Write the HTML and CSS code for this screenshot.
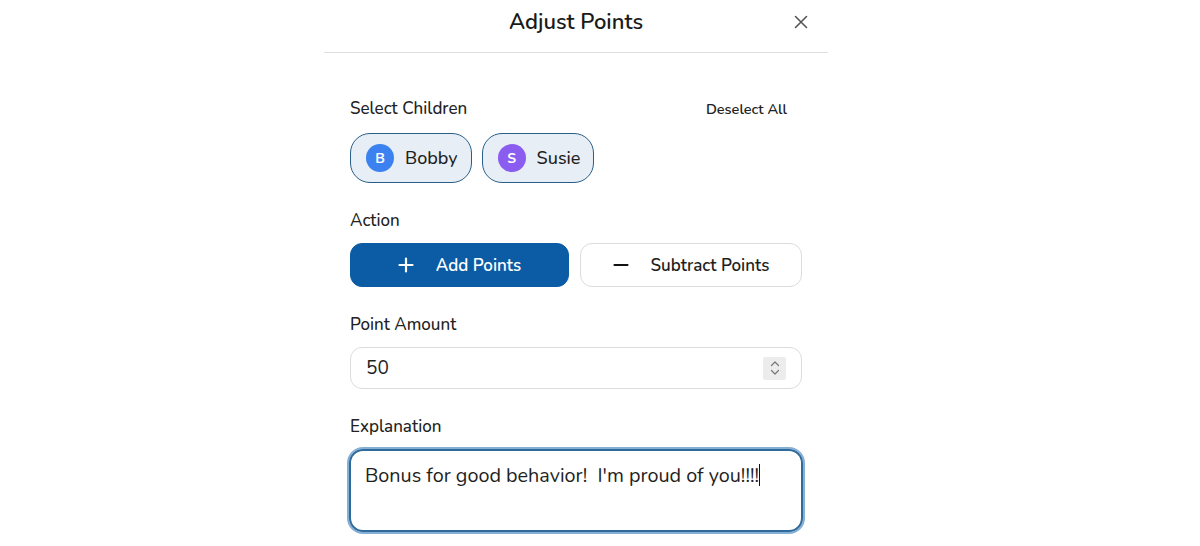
FILE: index.html
```html
<!DOCTYPE html>
<html lang="en">
<head>
<meta charset="utf-8">
<title>Adjust Points</title>
<link rel="stylesheet" href="styles.css">
</head>
<body>
<div class="page">
  <div class="modal">
    <header class="modal-header">
      <span class="spacer"></span>
      <h1 class="modal-title">Adjust Points</h1>
      <button class="close-btn" aria-label="Close">
        <svg width="14" height="14" viewBox="0 0 14 14"><path d="M1.5 1.5 L12.5 12.5 M12.5 1.5 L1.5 12.5" stroke="#555" stroke-width="1.6" stroke-linecap="round"/></svg>
      </button>
    </header>
    <div class="modal-body">
      <section class="field">
        <div class="field-head">
          <label class="field-label">Select Children</label>
          <button class="link-btn">Deselect All</button>
        </div>
        <div class="chips">
          <button class="chip"><span class="avatar avatar-blue">B</span><span class="chip-name">Bobby</span></button>
          <button class="chip"><span class="avatar avatar-purple">S</span><span class="chip-name">Susie</span></button>
        </div>
      </section>
      <section class="field">
        <label class="field-label">Action</label>
        <div class="actions">
          <button class="action action-active">
            <svg width="16" height="16" viewBox="0 0 16 16"><path d="M8 1.5 V14.5 M1.5 8 H14.5" stroke="#fff" stroke-width="2.2" stroke-linecap="round"/></svg>
            <span>Add Points</span>
          </button>
          <button class="action">
            <svg width="16" height="16" viewBox="0 0 16 16"><path d="M1.5 8 H14.5" stroke="#111" stroke-width="2.2" stroke-linecap="round"/></svg>
            <span>Subtract Points</span>
          </button>
        </div>
      </section>
      <section class="field">
        <label class="field-label">Point Amount</label>
        <div class="number-input">
          <span class="number-value">50</span>
          <span class="spinner">
            <svg width="12" height="18" viewBox="0 0 12 18"><path d="M2.5 6.5 L6 3 L9.5 6.5 M2.5 11.5 L6 15 L9.5 11.5" fill="none" stroke="#777" stroke-width="1.2" stroke-linecap="round" stroke-linejoin="round"/></svg>
          </span>
        </div>
      </section>
      <section class="field">
        <label class="field-label">Explanation</label>
        <div class="textarea">Bonus for good behavior!  I'm proud of you!!!!<span class="caret"></span></div>
      </section>
    </div>
  </div>
</div>
</body>
</html>
```
FILE: styles.css
```css
* { box-sizing: border-box; }
html, body { margin: 0; padding: 0; background: #fff; }
body {
  font-family: "Nunito", "Lato", "Noto Sans", sans-serif;
  color: #1f1f1f;
  height: 546px;
  overflow: hidden;
}
button { font-family: inherit; color: inherit; cursor: pointer; }
.page { padding-left: 324px; }
.modal { width: 504px; }
.modal-header {
  height: 53px;
  border-bottom: 1px solid #dedede;
  display: grid;
  grid-template-columns: 1fr auto 1fr;
  align-items: center;
  padding-bottom: 9px;
}
.modal-title {
  margin: 0;
  font-size: 22px;
  font-weight: 600;
  color: #1a1a1a;
}
.close-btn {
  justify-self: end;
  margin-right: 19px;
  border: 0;
  background: transparent;
  padding: 0;
  width: 16px;
  height: 16px;
  display: flex;
  align-items: center;
  justify-content: center;
}
.modal-body {
  padding: 44px 26px 0 26px;
  display: flex;
  flex-direction: column;
  gap: 26px;
}
.field { display: flex; flex-direction: column; gap: 10px; }
.field-head { display: flex; justify-content: space-between; align-items: center; padding-right: 14px; }
.field-label { font-size: 17px; line-height: 24px; font-weight: 500; color: #222; }
.link-btn {
  border: 0; background: transparent; padding: 0;
  font-size: 14.5px; font-weight: 600; color: #222;
  margin-right: 1px;
}
.chips { display: flex; gap: 10px; margin-top: 2px; }
.chip {
  height: 50px;
  display: flex;
  align-items: center;
  gap: 11px;
  padding: 0 13px 0 15px;
  border: 1.5px solid #285f89;
  border-radius: 20px;
  background: #e7eef6;
}
.avatar {
  width: 28px; height: 28px; border-radius: 50%;
  display: flex; align-items: center; justify-content: center;
  color: #fff; font-size: 14px; font-weight: 700;
}
.avatar-blue { background: #3b82f0; }
.avatar-purple { background: #8b5cf0; }
.chip-name { font-size: 18px; font-weight: 500; color: #1f1f1f; }
.actions { display: grid; grid-template-columns: 219px 1fr; gap: 11px; }
.action {
  height: 44px;
  display: flex; align-items: center; justify-content: center; gap: 22px;
  border: 1px solid #dcdcdc;
  border-radius: 12px;
  background: #fff;
  font-size: 17px; font-weight: 600; color: #1f1f1f;
}
.action-active { background: #0b5ca4; border-color: #0b5ca4; color: #fff; }
.number-input {
  height: 42px;
  display: flex; align-items: center; justify-content: space-between;
  border: 1px solid #dcdcdc;
  border-radius: 12px;
  padding: 0 15px 0 15px;
}
.number-value { font-size: 19px; color: #1f1f1f; }
.spinner {
  width: 23px; height: 23px; background: #ececec; border-radius: 2px;
  display: flex; align-items: center; justify-content: center;
}
.textarea {
  margin: 0 -1px;
  height: 83px;
  border: 2px solid #2f6a9c;
  box-shadow: 0 0 0 2px #86afd6;
  border-radius: 14px;
  padding: 12px 14px;
  font-size: 19.8px;
  line-height: 26px;
  white-space: pre-wrap;
  color: #1f1f1f;
}
.caret {
  display: inline-block;
  width: 1.5px;
  height: 22px;
  background: #111;
  vertical-align: -4px;
}
```
